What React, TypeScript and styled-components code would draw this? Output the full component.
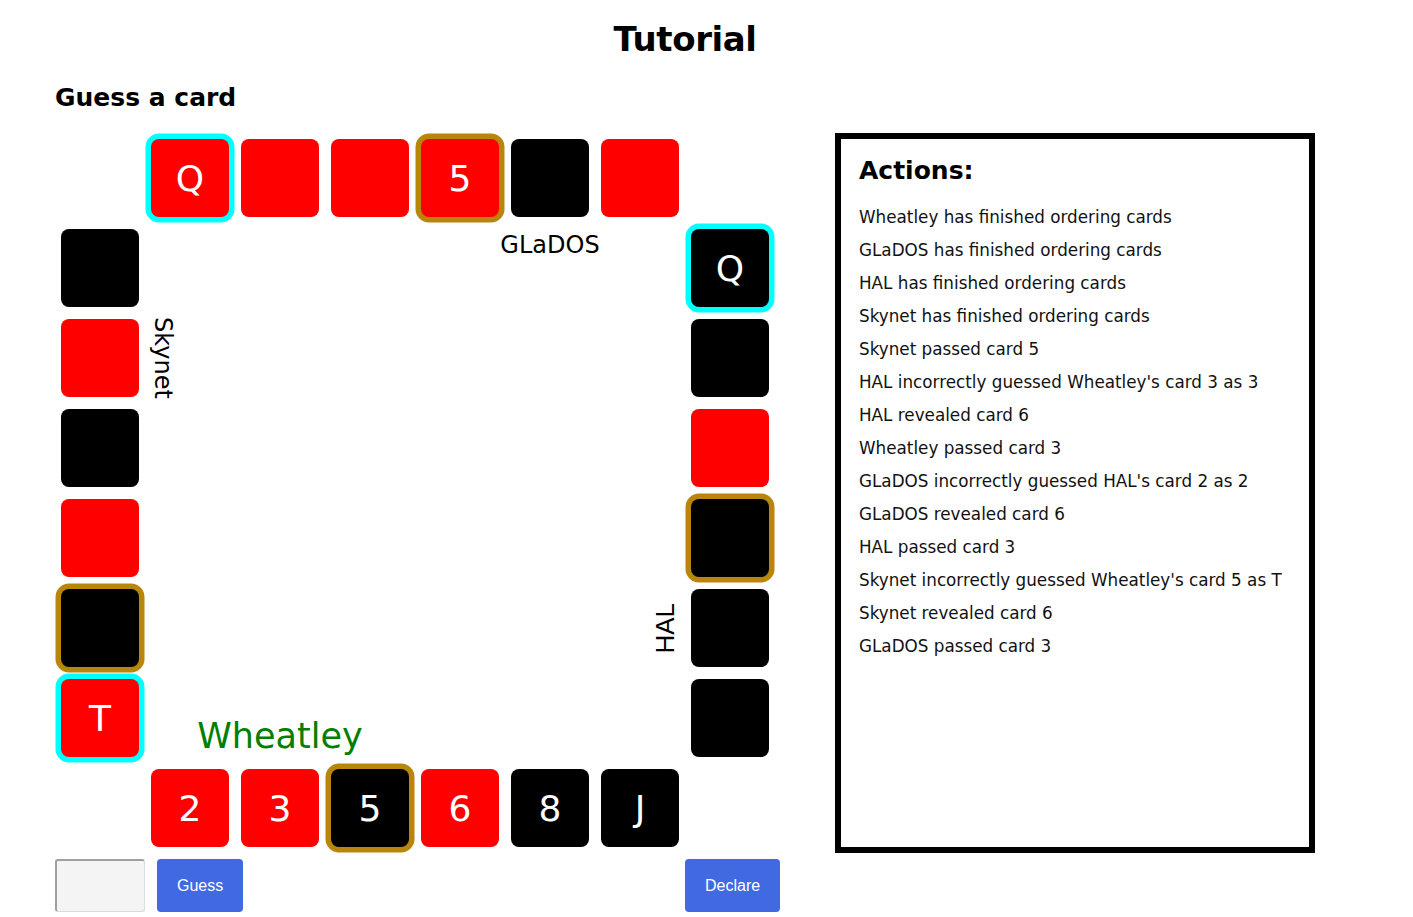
import React from 'react';
import styled, { createGlobalStyle } from 'styled-components';

const GlobalStyle = createGlobalStyle`
  body {
    margin: 8px;
    background: #fff;
    color: #000;
    font-family: "DejaVu Sans", Verdana, sans-serif;
  }
`;

type Suit = 'red' | 'black';
type Mark = 'cyan' | 'gold';

interface CardData {
    suit: Suit;
    value?: string;
    mark?: Mark;
    row: number;
    col: number;
}

const cards: CardData[] = [
    // GLaDOS (top)
    { suit: 'red', value: 'Q', mark: 'cyan', row: 1, col: 2 },
    { suit: 'red', row: 1, col: 3 },
    { suit: 'red', row: 1, col: 4 },
    { suit: 'red', value: '5', mark: 'gold', row: 1, col: 5 },
    { suit: 'black', row: 1, col: 6 },
    { suit: 'red', row: 1, col: 7 },
    // Skynet (left)
    { suit: 'black', row: 2, col: 1 },
    { suit: 'red', row: 3, col: 1 },
    { suit: 'black', row: 4, col: 1 },
    { suit: 'red', row: 5, col: 1 },
    { suit: 'black', mark: 'gold', row: 6, col: 1 },
    { suit: 'red', value: 'T', mark: 'cyan', row: 7, col: 1 },
    // HAL (right)
    { suit: 'black', value: 'Q', mark: 'cyan', row: 2, col: 8 },
    { suit: 'black', row: 3, col: 8 },
    { suit: 'red', row: 4, col: 8 },
    { suit: 'black', mark: 'gold', row: 5, col: 8 },
    { suit: 'black', row: 6, col: 8 },
    { suit: 'black', row: 7, col: 8 },
    // Wheatley (bottom)
    { suit: 'red', value: '2', row: 8, col: 2 },
    { suit: 'red', value: '3', row: 8, col: 3 },
    { suit: 'black', value: '5', mark: 'gold', row: 8, col: 4 },
    { suit: 'red', value: '6', row: 8, col: 5 },
    { suit: 'black', value: '8', row: 8, col: 6 },
    { suit: 'black', value: 'J', row: 8, col: 7 },
];

const actions = [
    'Wheatley has finished ordering cards',
    'GLaDOS has finished ordering cards',
    'HAL has finished ordering cards',
    'Skynet has finished ordering cards',
    'Skynet passed card 5',
    "HAL incorrectly guessed Wheatley's card 3 as 3",
    'HAL revealed card 6',
    'Wheatley passed card 3',
    "GLaDOS incorrectly guessed HAL's card 2 as 2",
    'GLaDOS revealed card 6',
    'HAL passed card 3',
    "Skynet incorrectly guessed Wheatley's card 5 as T",
    'Skynet revealed card 6',
    'GLaDOS passed card 3',
];

const markColors: Record<Mark, string> = {
    cyan: '#00ffff',
    gold: '#b8860b',
};

const App = () => {
    return (
        <>
            <GlobalStyle />
            <Page>
                <Title>Tutorial</Title>
                <Layout>
                    <SubTitle>Guess a card</SubTitle>
                    <Board>
                        {cards.map((card, i) => (
                            <Slot key={i} $row={card.row} $col={card.col}>
                                <Card $suit={card.suit} $mark={card.mark}>
                                    {card.value}
                                </Card>
                            </Slot>
                        ))}
                        <TopName>GLaDOS</TopName>
                        <LeftName>Skynet</LeftName>
                        <RightName>HAL</RightName>
                        <BottomName>Wheatley</BottomName>
                    </Board>
                    <ActionPanel>
                        <PanelHeading>Actions:</PanelHeading>
                        <ActionList>
                            {actions.map((text, i) => (
                                <ActionItem key={i}>{text}</ActionItem>
                            ))}
                        </ActionList>
                    </ActionPanel>
                    <Controls>
                        <GuessInput type="text" />
                        <GuessButton>Guess</GuessButton>
                        <DeclareButton>Declare</DeclareButton>
                    </Controls>
                </Layout>
            </Page>
        </>
    );
};

const Page = styled.div`
    width: 1260px;
    margin-left: 47px;
`;

const Title = styled.h1`
    margin: 11px 0 0;
    font-size: 34px;
    line-height: 40px;
    letter-spacing: -0.4px;
    font-weight: bold;
    text-align: center;
`;

const Layout = styled.div`
    display: grid;
    grid-template-columns: 720px 480px;
    column-gap: 60px;
    align-items: start;
`;

const SubTitle = styled.h2`
    grid-column: 1 / 3;
    margin: 24px 0 20px;
    font-size: 25px;
    line-height: 30px;
    font-weight: bold;
`;

const Board = styled.div`
    display: grid;
    grid-template-columns: repeat(8, 90px);
    grid-template-rows: repeat(8, 90px);
`;

const Slot = styled.div<{ $row: number; $col: number }>`
    grid-row: ${({ $row }) => $row};
    grid-column: ${({ $col }) => $col};
    display: flex;
    align-items: center;
    justify-content: center;
`;

const Card = styled.div<{ $suit: Suit; $mark?: Mark }>`
    width: 78px;
    height: 78px;
    border-radius: 8px;
    background-color: ${({ $suit }) => ($suit === 'red' ? '#ff0000' : '#000000')};
    box-shadow: ${({ $mark }) => ($mark ? `0 0 0 5.5px ${markColors[$mark]}` : 'none')};
    color: #fff;
    font-size: 36px;
    display: flex;
    align-items: center;
    justify-content: center;
`;

const Name = styled.div`
    font-size: 24px;
    line-height: normal;
    white-space: nowrap;
`;

const TopName = styled(Name)`
    grid-row: 2;
    grid-column: 6;
    justify-self: center;
    align-self: start;
    padding-top: 8px;
`;

const LeftName = styled(Name)`
    grid-row: 3;
    grid-column: 2;
    justify-self: start;
    align-self: center;
    padding-left: 4px;
    writing-mode: vertical-rl;
`;

const RightName = styled(Name)`
    grid-row: 6;
    grid-column: 7;
    justify-self: end;
    align-self: center;
    margin-right: 4px;
    font-family: "Liberation Sans", Arial, sans-serif;
    font-size: 26px;
    writing-mode: vertical-rl;
    transform: rotate(180deg);
`;

const BottomName = styled(Name)`
    grid-row: 7;
    grid-column: 2 / 5;
    justify-self: center;
    align-self: end;
    margin-bottom: 7px;
    font-size: 35px;
    color: #008000;
`;

const ActionPanel = styled.section`
    box-sizing: border-box;
    height: 720px;
    border: 6px solid #000;
    padding: 17px 18px;
`;

const PanelHeading = styled.h2`
    margin: 0 0 15px;
    font-size: 25px;
    line-height: 30px;
    font-weight: bold;
`;

const ActionList = styled.div`
    display: flex;
    flex-direction: column;
`;

const ActionItem = styled.div`
    font-size: 16.8px;
    line-height: 33px;
    color: #111;
`;

const Controls = styled.div`
    grid-column: 1;
    display: grid;
    grid-template-columns: repeat(8, 90px);
    margin-top: 6px;
    height: 53px;
`;

const GuessInput = styled.input`
    grid-column: 1;
    box-sizing: border-box;
    width: 90px;
    height: 53px;
    margin: 0;
    background: #f4f4f4;
    border: 1px solid #dcdcdc;
    border-top: 2px solid #a0a0a0;
    border-left: 2px solid #a0a0a0;
    border-radius: 3px;
`;

const ActionButton = styled.button`
    height: 53px;
    padding: 0 20px;
    border: none;
    border-radius: 4px;
    background-color: #4169e1;
    color: #fff;
    font-family: "Liberation Sans", Arial, sans-serif;
    font-size: 16px;
    cursor: pointer;
    white-space: nowrap;
    justify-self: start;
`;

const GuessButton = styled(ActionButton)`
    grid-column: 2;
    margin-left: 12px;
`;

const DeclareButton = styled(ActionButton)`
    grid-column: 8;
`;

export default App;
